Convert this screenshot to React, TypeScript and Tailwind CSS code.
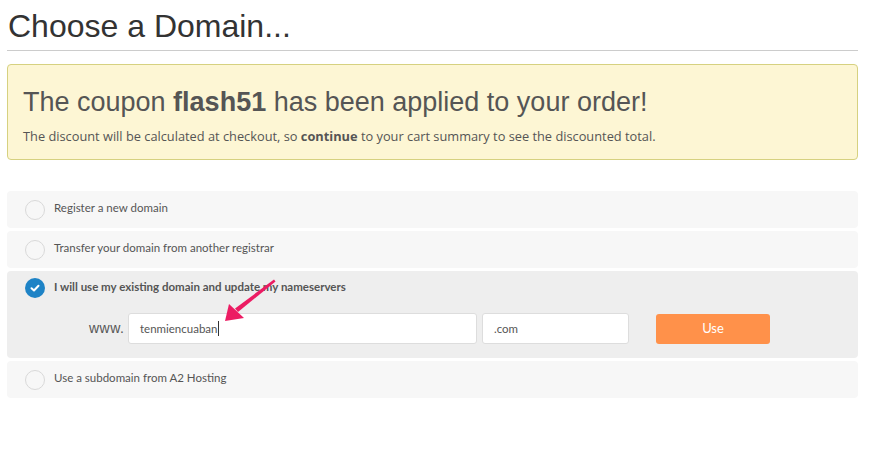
const Radio = ({ checked }: { checked?: boolean }) =>
  checked ? (
    <span className="flex h-5 w-5 shrink-0 items-center justify-center rounded-full bg-[#1e83c6]">
      <svg width="12" height="12" viewBox="0 0 12 12" fill="none" stroke="#fff" strokeWidth="2" strokeLinecap="round" strokeLinejoin="round">
        <polyline points="2.5 6.2 5 8.5 9.5 3.8" />
      </svg>
    </span>
  ) : (
    <span className="h-5 w-5 shrink-0 rounded-full border border-[#d9d9d9] bg-[#f7f7f7]" />
  );

const Option = ({ label }: { label: string }) => (
  <div className="flex h-[37px] items-center gap-[9px] rounded-[4px] bg-[#f7f7f7] pl-[18px] text-[11.5px] text-[#555]">
    <Radio />
    <span className="pb-[3px]">{label}</span>
  </div>
);

export default function App() {
  return (
    <div className="w-[871px] h-[455px] bg-white px-[7px] pt-[8px] font-['Lato',sans-serif] overflow-hidden">
      <h1 className="pl-[1px] font-['Liberation_Sans',Arial,sans-serif] text-[32px] leading-[36px] text-[#333]">
        Choose a Domain...
      </h1>
      <div className="mt-[6px] h-px w-[851px] bg-[#ccc]" />

      <div className="mt-[13px] w-[851px] h-[96px] rounded-[4px] border border-[#d6d180] bg-[#fdf6d4] px-[15px] pt-[21px]">
        <p className="font-['Liberation_Sans',Arial,sans-serif] text-[27px] leading-[32px] text-[#555]">
          The coupon <b>flash51</b> has been applied to your order!
        </p>
        <p className="mt-[9px] font-['Open_Sans',sans-serif] text-[12.8px] text-[#555]">
          The discount will be calculated at checkout, so <b>continue</b> to your cart summary to see the discounted total.
        </p>
      </div>

      <div className="mt-[31px] flex w-[851px] flex-col gap-[3px]">
        <Option label="Register a new domain" />
        <Option label="Transfer your domain from another registrar" />

        <div className="relative h-[87px] rounded-[4px] bg-[#eeeeee] pl-[18px] pt-[7px]">
          <div className="flex items-center gap-[9px] text-[11.5px] font-bold text-[#555]">
            <Radio checked />
            <span className="pb-[2px]">I will use my existing domain and update my nameservers</span>
          </div>
          <div className="mt-[15px] flex items-center">
            <span className="ml-[64px] w-[39px] font-['Liberation_Sans',Arial,sans-serif] text-[14px] tracking-[0.5px] text-[#555]">www.</span>
            <div className="flex h-[31px] w-[349px] items-center rounded-[3px] border border-[#ddd] bg-white pl-[11px] text-[11.5px] text-[#555]">
              tenmiencuaban<span className="ml-px h-[15px] w-px bg-[#333]" />
            </div>
            <div className="ml-[5px] flex h-[31px] w-[147px] items-center rounded-[3px] border border-[#ddd] bg-white pl-[11px] text-[11.5px] text-[#555]">
              .com
            </div>
            <button className="ml-[27px] h-[30px] w-[114px] rounded-[3px] bg-[#ff914a] text-[13px] text-white">
              Use
            </button>
          </div>
          <svg className="absolute left-[214px] top-[8px]" width="64" height="46" viewBox="0 0 64 46" fill="none">
            <path d="M53 0.5 L54.5 2.5 L17 33 L14 29.5 Z" fill="#ec1c63" />
            <polygon points="4,42 8,25 23,39" fill="#ec1c63" />
          </svg>
        </div>

        <Option label="Use a subdomain from A2 Hosting" />
      </div>
    </div>
  );
}
